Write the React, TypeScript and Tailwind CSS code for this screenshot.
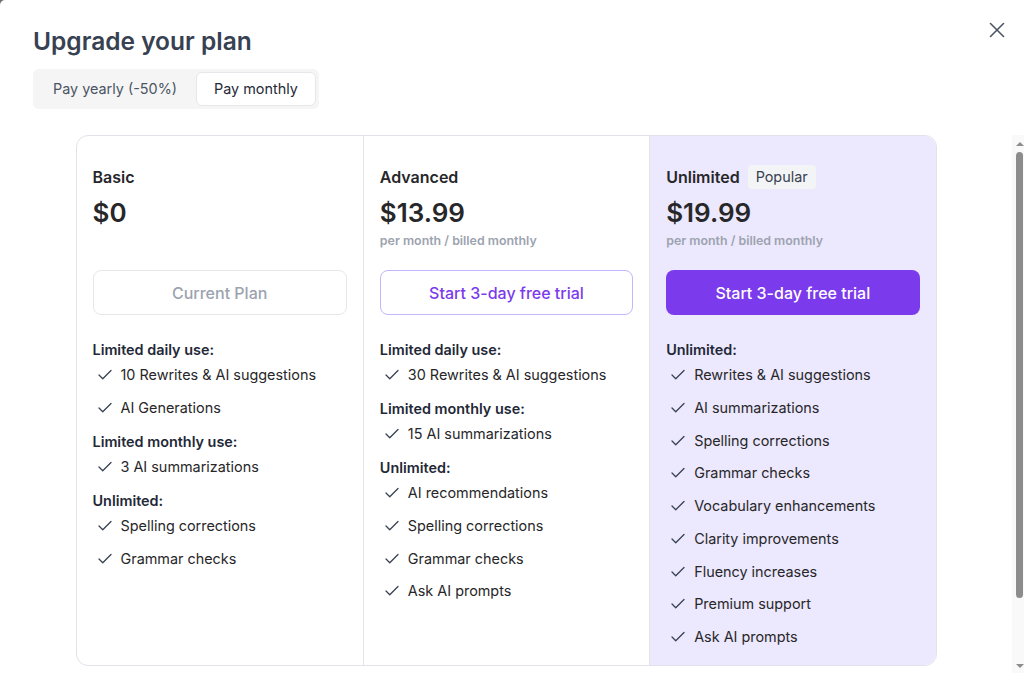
import { Check, X } from 'lucide-react'

type Section = { title: string; items: string[] }

type Plan = {
  name: string
  price: string
  note?: string
  badge?: string
  cta: string
  variant: 'current' | 'outline' | 'solid'
  sections: Section[]
}

const PLANS: Plan[] = [
  {
    name: 'Basic',
    price: '$0',
    cta: 'Current Plan',
    variant: 'current',
    sections: [
      { title: 'Limited daily use:', items: ['10 Rewrites & AI suggestions', 'AI Generations'] },
      { title: 'Limited monthly use:', items: ['3 AI summarizations'] },
      { title: 'Unlimited:', items: ['Spelling corrections', 'Grammar checks'] },
    ],
  },
  {
    name: 'Advanced',
    price: '$13.99',
    note: 'per month / billed monthly',
    cta: 'Start 3-day free trial',
    variant: 'outline',
    sections: [
      { title: 'Limited daily use:', items: ['30 Rewrites & AI suggestions'] },
      { title: 'Limited monthly use:', items: ['15 AI summarizations'] },
      {
        title: 'Unlimited:',
        items: ['AI recommendations', 'Spelling corrections', 'Grammar checks', 'Ask AI prompts'],
      },
    ],
  },
  {
    name: 'Unlimited',
    badge: 'Popular',
    price: '$19.99',
    note: 'per month / billed monthly',
    cta: 'Start 3-day free trial',
    variant: 'solid',
    sections: [
      {
        title: 'Unlimited:',
        items: [
          'Rewrites & AI suggestions',
          'AI summarizations',
          'Spelling corrections',
          'Grammar checks',
          'Vocabulary enhancements',
          'Clarity improvements',
          'Fluency increases',
          'Premium support',
          'Ask AI prompts',
        ],
      },
    ],
  },
]

const CTA_STYLES = {
  current: 'border border-[#e5e7eb] bg-white text-[#9ca3af]',
  outline: 'border border-[#c4b5fd] bg-white text-[#7c3aed]',
  solid: 'bg-[#7c3aed] text-white',
}

function PlanColumn({ plan, index }: { plan: Plan; index: number }) {
  const highlighted = plan.variant === 'solid'
  return (
    <div
      className={`flex flex-col px-4 pt-[29px] pb-[18px] ${
        index > 0 ? 'border-l border-[#e2e2ea]' : ''
      } ${highlighted ? 'bg-[#ece8fd] rounded-r-xl' : ''}`}
    >
      {/* Name + badge */}
      <div className="flex items-center gap-2 h-6">
        <span className="text-[16px] font-semibold text-[#27272a]">{plan.name}</span>
        {plan.badge && (
          <span className="h-6 px-2 flex items-center rounded bg-[#f3f4f6] text-[14.4px] text-[#374151]">
            {plan.badge}
          </span>
        )}
      </div>

      {/* Price */}
      <div className="mt-[8px] text-[26px] leading-8 font-semibold text-[#27272a]">{plan.price}</div>
      <div className="mt-[4px] h-4 text-[12.4px] leading-4 font-semibold text-[#9ca3af]">
        {plan.note}
      </div>

      <button
        type="button"
        className={`mt-[21px] h-[45px] w-full rounded-lg text-[16px] font-medium ${CTA_STYLES[plan.variant]}`}
      >
        {plan.cta}
      </button>

      {/* Features */}
      <div className="mt-[25px] flex flex-col gap-[14px]">
        {plan.sections.map((section) => (
          <div key={section.title} className="flex flex-col">
            <div className="text-[14.4px] leading-5 font-semibold text-[#1f2937]">{section.title}</div>
            <ul className="mt-[5px] flex flex-col gap-[12.75px]">
              {section.items.map((item) => (
                <li
                  key={item}
                  className="flex items-center gap-[7px] pl-[3px] text-[14.4px] leading-5 text-[#27272a]"
                >
                  <Check size={18} strokeWidth={1.75} className="shrink-0 text-[#374151]" />
                  {item}
                </li>
              ))}
            </ul>
          </div>
        ))}
      </div>
    </div>
  )
}

function ScrollRail() {
  return (
    <div className="w-[12px] shrink-0 flex flex-col items-center bg-[#f9f9f9] pl-[3px]">
      <div className="h-[17px] flex items-center justify-center">
        <span className="mt-[1px] border-x-[4px] border-b-[4px] border-x-transparent border-b-[#8c8c8c]" />
      </div>
      <div className="h-[446px] w-[7px] rounded-full bg-[#8c8c8c]" />
      <div className="flex-1" />
      <div className="h-[15px] flex items-center justify-center">
        <span className="border-x-[4px] border-t-[4px] border-x-transparent border-t-[#8c8c8c]" />
      </div>
    </div>
  )
}

export default function App() {
  return (
    <div className="h-[673px] w-[1024px] bg-[#6b6b74] overflow-hidden font-['Inter',sans-serif]">
      <div className="h-full bg-white rounded-tl-[5px] flex flex-col">
        {/* Header */}
        <div className="flex items-start justify-between pl-[33px] pr-[14px] pt-[17px]">
          <h1 className="mt-2 text-[24.5px] leading-8 font-semibold text-[#374151]">Upgrade your plan</h1>
          <button type="button" className="text-[#4b5563]">
            <X size={26} strokeWidth={1.5} />
          </button>
        </div>

        {/* Billing toggle */}
        <div className="ml-[33px] mt-3 flex w-fit gap-[2px] rounded-md bg-[#f5f5f6] p-[3px]">
          <button type="button" className="h-[34px] px-[17px] rounded-md text-[14.4px] text-[#4b5563]">
            Pay yearly (-50%)
          </button>
          <button
            type="button"
            className="h-[34px] px-[17px] rounded-md border border-[#e5e7eb] bg-white text-[14.4px] text-[#1f2937]"
          >
            Pay monthly
          </button>
        </div>

        {/* Plans */}
        <div className="mt-[26px] flex flex-1 min-h-0">
          <div className="flex-1 overflow-hidden">
            <div className="mx-auto grid w-[861px] grid-cols-3 rounded-xl border border-[#e2e2ea]">
              {PLANS.map((plan, i) => (
                <PlanColumn key={plan.name} plan={plan} index={i} />
              ))}
            </div>
          </div>
          <ScrollRail />
        </div>
      </div>
    </div>
  )
}
